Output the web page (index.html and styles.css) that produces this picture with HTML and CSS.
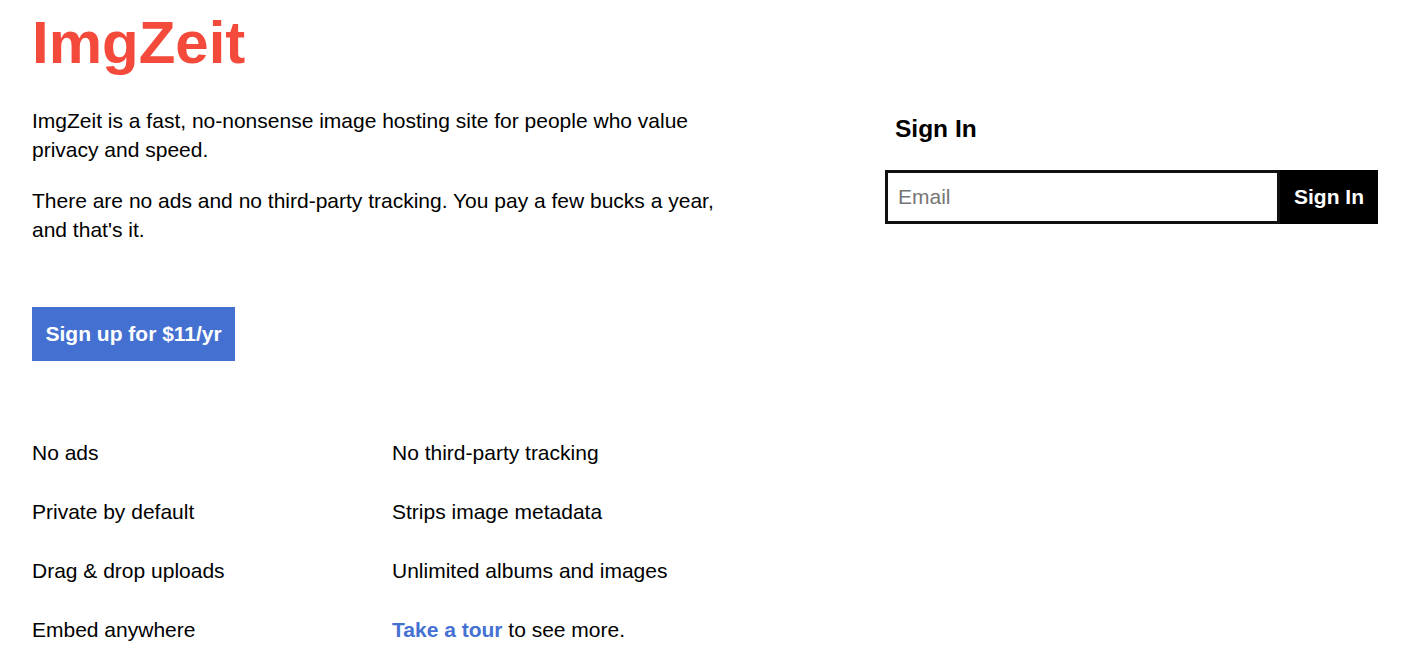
FILE: index.html
```html
<!DOCTYPE html>
<html lang="en">
<head>
<meta charset="utf-8">
<title>ImgZeit</title>
<link rel="stylesheet" href="styles.css">
</head>
<body>
<div class="page">
  <main class="intro">
    <h1 class="logo">ImgZeit</h1>
    <p class="lead">ImgZeit is a fast, no-nonsense image hosting site for people who value privacy and speed.</p>
    <p class="lead">There are no ads and no third-party tracking. You pay a few bucks a year, and that's it.</p>
    <a class="signup" href="#">Sign up for $11/yr</a>
    <ul class="features">
      <li>No ads</li>
      <li>No third-party tracking</li>
      <li>Private by default</li>
      <li>Strips image metadata</li>
      <li>Drag &amp; drop uploads</li>
      <li>Unlimited albums and images</li>
      <li>Embed anywhere</li>
      <li><a class="tour" href="#">Take a tour</a> to see more.</li>
    </ul>
  </main>
  <aside class="signin">
    <h2 class="signin-title">Sign In</h2>
    <form class="signin-form">
      <input class="email" type="email" placeholder="Email">
      <button class="signin-btn" type="button">Sign In</button>
    </form>
  </aside>
</div>
</body>
</html>
```

FILE: styles.css
```css
* { box-sizing: border-box; }

body {
  margin: 0;
  background: #fff;
  color: #000;
  font-family: "Liberation Sans", Arial, sans-serif;
  font-size: 21px;
  line-height: 29px;
}

.page {
  display: flex;
  padding: 8px 24px 0 32px;
}

.intro {
  width: 710px;
  flex: none;
}

.logo {
  margin: 0 0 29px;
  font-size: 60px;
  line-height: 69px;
  font-weight: bold;
  color: #f44a3b;
}

.lead {
  margin: 0 0 22px;
}

.signup {
  display: inline-block;
  margin-top: 41px;
  padding: 12px 13.5px;
  line-height: 30px;
  background: #4471d1;
  color: #fff;
  font-weight: bold;
  text-decoration: none;
}

.features {
  list-style: none;
  margin: 77px 0 0;
  padding: 0;
  display: grid;
  grid-template-columns: 360px 360px;
  row-gap: 30px;
}

.features li {
  line-height: 29px;
}

.tour {
  color: #4471d2;
  font-weight: bold;
  text-decoration: none;
}

.signin {
  width: 493px;
  flex: none;
  margin-left: auto;
  padding-top: 106px;
}

.signin-title {
  margin: 0 0 26px;
  padding-left: 10px;
  font-size: 24.5px;
  line-height: 30px;
  font-weight: bold;
}

.signin-form {
  display: flex;
  margin: 0;
}

.email {
  flex: 1;
  min-width: 0;
  height: 54px;
  border: 3px solid #111;
  padding: 0 10px;
  font-family: "Liberation Sans", Arial, sans-serif;
  font-size: 21px;
  color: #000;
  outline: none;
}

.email::placeholder {
  color: #767676;
}

.signin-btn {
  flex: none;
  height: 54px;
  border: 0;
  padding: 0 14px;
  background: #000;
  color: #fff;
  font-family: "Liberation Sans", Arial, sans-serif;
  font-size: 21px;
  font-weight: bold;
}
```
